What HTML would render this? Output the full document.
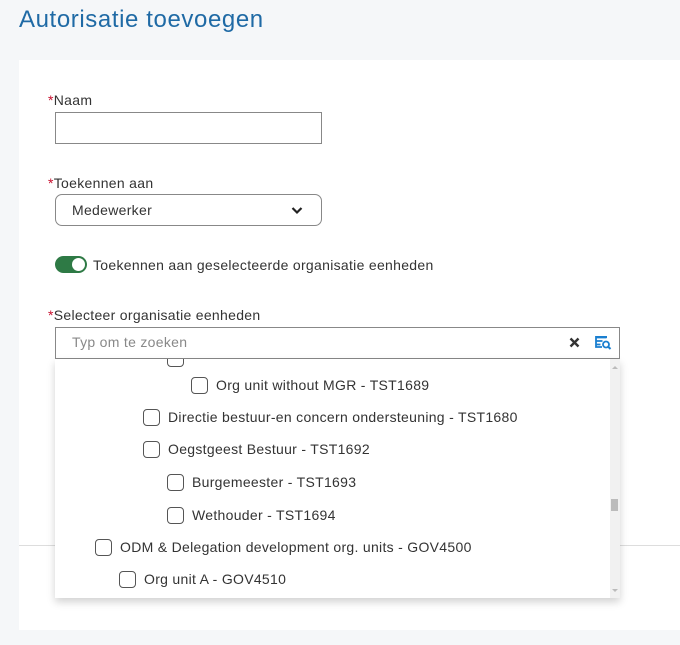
<!DOCTYPE html>
<html><head><meta charset="utf-8"><style>
*{box-sizing:border-box;margin:0;padding:0}
body{width:680px;height:645px;background:#f5f7f9;font-family:"Liberation Sans",sans-serif;color:#333;position:relative;overflow:hidden;font-size:14px;letter-spacing:0.3px}
.abs{position:absolute}
h1{position:absolute;left:19px;top:6px;font-size:24px;font-weight:normal;color:#1f6aa5;letter-spacing:0.6px}
.card{left:19px;top:60px;width:661px;height:570px;background:#fff}
.lbl{font-size:14px;color:#333}
.lbl b{color:#c8102e;font-weight:normal}
.cb{position:absolute;width:17px;height:17px;border:1.5px solid #555;border-radius:4px;background:#fff}
.it{position:absolute;font-size:14px;color:#333;white-space:nowrap}
</style></head><body>
<h1>Autorisatie toevoegen</h1>
<div class="abs card"></div>
<div class="abs" style="left:19px;top:545px;width:661px;height:1px;background:#ddd"></div>
<div class="abs lbl" style="left:48px;top:92px"><b>*</b>Naam</div>
<div class="abs" style="left:55px;top:112px;width:267px;height:32px;border:1px solid #888"></div>
<div class="abs lbl" style="left:48px;top:175px"><b>*</b>Toekennen aan</div>
<div class="abs" style="left:55px;top:194px;width:267px;height:32px;border:1px solid #888;border-radius:7px"></div>
<div class="abs" style="left:72px;top:202px;font-size:14px">Medewerker</div>
<svg class="abs" style="left:291px;top:206px" width="12" height="9" viewBox="0 0 12 9"><path d="M1.5 2l4.5 4.5L10.5 2" stroke="#222" stroke-width="2.2" fill="none"/></svg>
<div class="abs" style="left:55px;top:256px;width:32px;height:17px;border-radius:9px;background:#2e7a45"></div>
<div class="abs" style="left:72px;top:258px;width:13px;height:13px;border-radius:50%;background:#fff"></div>
<div class="abs" style="left:93px;top:257px;font-size:14px">Toekennen aan geselecteerde organisatie eenheden</div>
<div class="abs lbl" style="left:48px;top:307px"><b>*</b>Selecteer organisatie eenheden</div>
<div class="abs" style="left:55px;top:327px;width:565px;height:32px;border:1px solid #888;background:#fff"></div>
<div class="abs" style="left:72px;top:334px;font-size:14px;color:#888">Typ om te zoeken</div>
<svg class="abs" style="left:569px;top:337px" width="11" height="11" viewBox="0 0 11 11"><path d="M1.5 1.5l8 8M9.5 1.5l-8 8" stroke="#333" stroke-width="2.4"/></svg>
<svg class="abs" style="left:595px;top:335px" width="17" height="15" viewBox="0 0 17 15"><path d="M1.5 2.5h10M1.5 6h6M1.5 9.5h4M1 1v11h6" stroke="#1a7fd0" stroke-width="1.8" fill="none"/><rect x="1" y="1" width="11" height="2" fill="#1a7fd0"/><circle cx="11" cy="9.5" r="3" stroke="#1a7fd0" stroke-width="1.8" fill="none"/><path d="M13 11.5l2.5 2.5" stroke="#1a7fd0" stroke-width="2"/></svg>
<div class="abs" style="left:55px;top:359px;width:565px;height:239px;background:#fff;box-shadow:0 4px 8px rgba(0,0,0,.18);overflow:hidden">
<div class="cb" style="left:112px;top:-9px"></div>
<div class="cb" style="left:136px;top:18px"></div><div class="it" style="left:161px;top:18px">Org unit without MGR - TST1689</div>
<div class="cb" style="left:88px;top:50px"></div><div class="it" style="left:113px;top:50px">Directie bestuur-en concern ondersteuning - TST1680</div>
<div class="cb" style="left:88px;top:82px"></div><div class="it" style="left:113px;top:82px">Oegstgeest Bestuur - TST1692</div>
<div class="cb" style="left:112px;top:115px"></div><div class="it" style="left:137px;top:115px">Burgemeester - TST1693</div>
<div class="cb" style="left:112px;top:148px"></div><div class="it" style="left:137px;top:148px">Wethouder - TST1694</div>
<div class="cb" style="left:40px;top:180px"></div><div class="it" style="left:65px;top:180px">ODM &amp; Delegation development org. units - GOV4500</div>
<div class="cb" style="left:64px;top:212px"></div><div class="it" style="left:89px;top:212px">Org unit A - GOV4510</div>
<div class="abs" style="left:555px;top:0;width:10px;height:239px;background:#f1f1f1"></div>
<div class="abs" style="left:556px;top:140px;width:7px;height:12px;background:#bbb"></div>
<div class="abs" style="left:557px;top:4px;width:0;height:0;border:3px solid transparent;border-bottom-color:#bbb"></div>
<div class="abs" style="left:557px;top:230px;width:0;height:0;border:3px solid transparent;border-top-color:#bbb"></div>
</div>
</body></html>
